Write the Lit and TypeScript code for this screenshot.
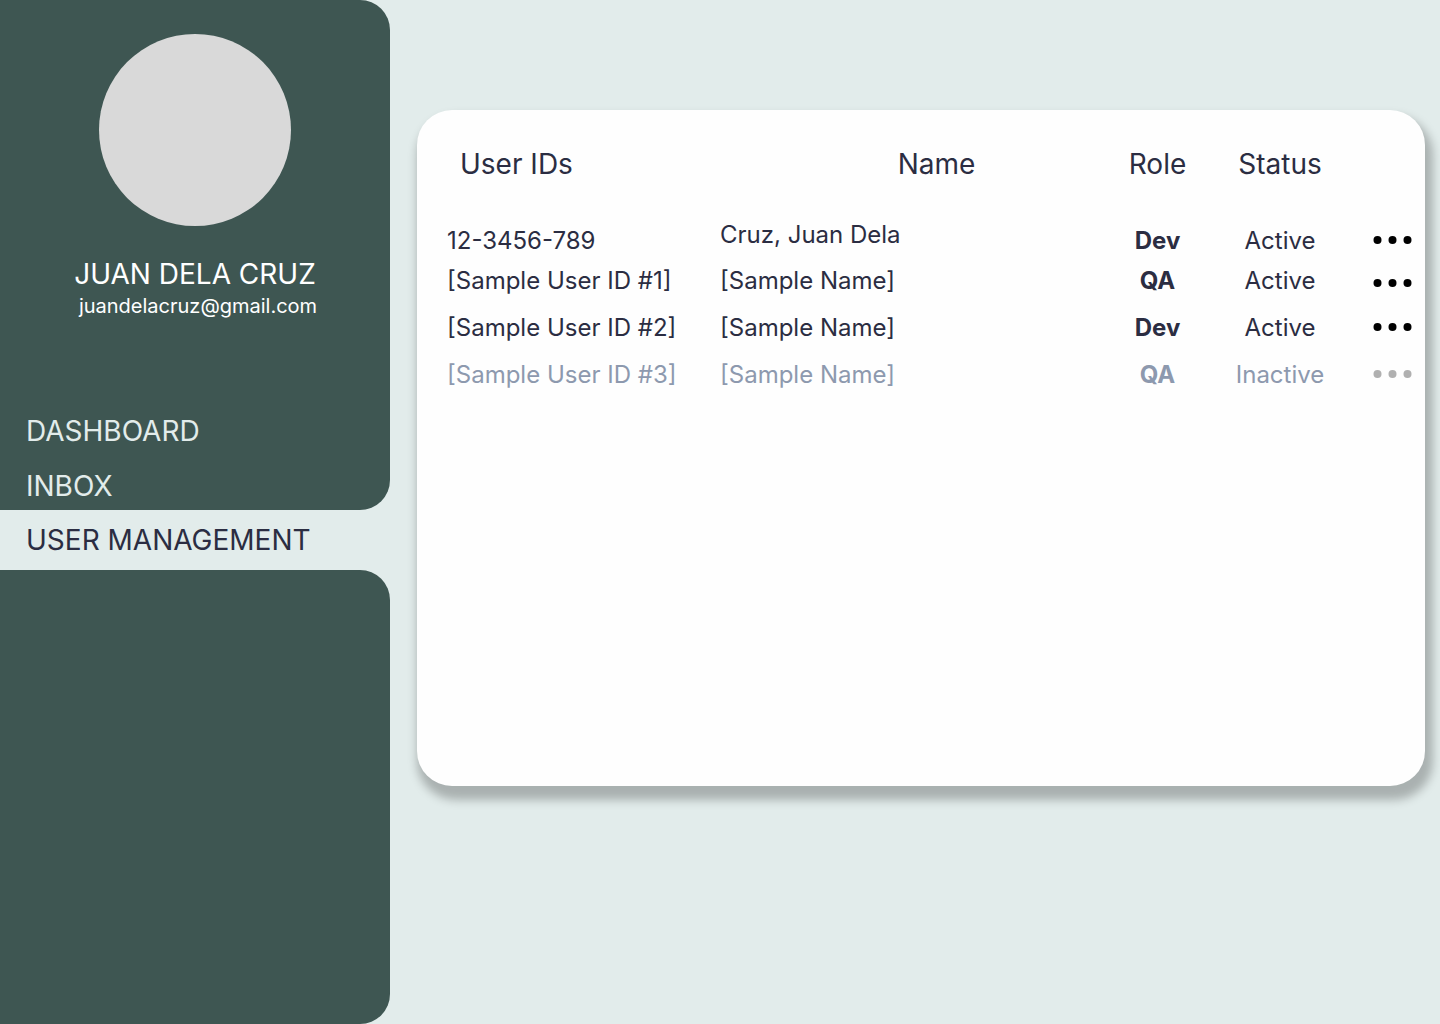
import { LitElement, html, css } from "lit";
import { customElement, property, state } from "lit/decorators.js";
import { classMap } from "lit/directives/class-map.js";

interface User {
  id: string;
  name: string;
  role: string;
  active: boolean;
}

@customElement("side-bar")
class SideBar extends LitElement {
  static styles = css`
    :host {
      display: flex;
      flex-direction: column;
    }
    nav {
      display: flex;
      flex-direction: column;
      flex: 1;
    }
    .panel {
      background: #3e5652;
      border-radius: 0 30px 30px 0;
    }
    .top {
      padding: 34px 0 7px;
    }
    .rest {
      flex: 1;
    }
    .profile {
      display: flex;
      flex-direction: column;
      align-items: center;
      color: #fff;
    }
    .avatar {
      width: 192px;
      height: 192px;
      border-radius: 50%;
      background: #d9d9d9;
    }
    .name {
      margin-top: 31px;
      font-size: 28px;
      line-height: 34px;
    }
    .email {
      margin-top: 3px;
      padding-left: 6px;
      font-size: 20px;
      line-height: 24px;
    }
    .links {
      display: flex;
      flex-direction: column;
      gap: 21px;
      margin-top: 96px;
    }
    a {
      padding-left: 26px;
      font-size: 28px;
      line-height: 34px;
      color: #e2eceb;
      text-decoration: none;
    }
    .current {
      padding-top: 13px;
      padding-bottom: 13px;
      color: #2b2d42;
    }
  `;

  @property() name = "";
  @property() email = "";

  render() {
    return html`
      <nav aria-label="Main">
        <div class="panel top">
          <div class="profile">
            <div class="avatar"></div>
            <div class="name">${this.name}</div>
            <div class="email">${this.email}</div>
          </div>
          <div class="links">
            <a href="#dashboard">DASHBOARD</a>
            <a href="#inbox">INBOX</a>
          </div>
        </div>
        <a class="current" href="#users" aria-current="page">USER MANAGEMENT</a>
        <div class="panel rest"></div>
      </nav>
    `;
  }
}

@customElement("user-table")
class UserTable extends LitElement {
  static styles = css`
    :host {
      display: block;
    }
    table {
      width: 100%;
      table-layout: fixed;
      border-collapse: collapse;
      color: #2b2d42;
    }
    .col-id {
      width: 303px;
    }
    .col-role {
      width: 85px;
    }
    .col-status {
      width: 160px;
    }
    .col-menu {
      width: 65px;
    }
    th {
      padding: 37px 0 39px;
      font-size: 28px;
      font-weight: 400;
      line-height: 34px;
      text-align: center;
      white-space: nowrap;
    }
    th.id {
      padding-left: 43px;
      text-align: left;
    }
    th.name {
      padding-left: 38px;
    }
    td {
      padding: 0 0 18px;
      vertical-align: top;
      font-size: 24px;
      line-height: 29px;
      text-align: center;
      white-space: nowrap;
    }
    td.id {
      padding-left: 30px;
      text-align: left;
    }
    td.name {
      text-align: left;
    }
    .first td {
      padding-top: 6px;
      padding-bottom: 11px;
    }
    .first td.name {
      padding-top: 0;
    }
    td.role {
      font-weight: 700;
    }
    td.menu {
      padding-bottom: 0;
    }
    .inactive {
      color: #8d99ae;
    }
    button {
      display: block;
      width: 100%;
      height: 28px;
      padding: 0;
      border: 0;
      background: none;
      color: #000;
      cursor: pointer;
    }
    .first + tr button {
      margin-top: 3px;
    }
    .inactive button {
      color: #b0b0b0;
    }
    svg {
      display: block;
      margin: 0 auto;
      fill: currentColor;
    }
  `;

  @property({ attribute: false }) users: User[] = [];

  private renderUser(user: User, index: number) {
    return html`
      <tr class=${classMap({ first: index === 0, inactive: !user.active })}>
        <td class="id">${user.id}</td>
        <td class="name">${user.name}</td>
        <td class="role">${user.role}</td>
        <td>${user.active ? "Active" : "Inactive"}</td>
        <td class="menu">
          <button type="button" aria-label="More actions">
            <svg width="39" height="8" viewBox="0 0 39 8" aria-hidden="true">
              <circle cx="4.5" cy="4" r="4" />
              <circle cx="19.5" cy="4" r="4" />
              <circle cx="34.5" cy="4" r="4" />
            </svg>
          </button>
        </td>
      </tr>
    `;
  }

  render() {
    return html`
      <table>
        <colgroup>
          <col class="col-id" />
          <col />
          <col class="col-role" />
          <col class="col-status" />
          <col class="col-menu" />
        </colgroup>
        <thead>
          <tr>
            <th class="id" scope="col">User IDs</th>
            <th class="name" scope="col">Name</th>
            <th scope="col">Role</th>
            <th scope="col">Status</th>
            <td></td>
          </tr>
        </thead>
        <tbody>
          ${this.users.map((user, index) => this.renderUser(user, index))}
        </tbody>
      </table>
    `;
  }
}

@customElement("app-root")
class AppRoot extends LitElement {
  static styles = css`
    :host {
      display: grid;
      grid-template-columns: 390px minmax(0, 1fr);
      min-height: 100vh;
      background: #e2eceb;
      font-family: Inter, "Liberation Sans", sans-serif;
    }
    main {
      padding: 110px 15px 110px 27px;
    }
    .card {
      min-height: 66vh;
      border-radius: 35px;
      background: #fefefe;
      box-shadow: 4px 10px 10px 4px rgba(0, 0, 0, 0.25);
    }
  `;

  @state() private users: User[] = [
    { id: "12-3456-789", name: "Cruz, Juan Dela", role: "Dev", active: true },
    { id: "[Sample User ID #1]", name: "[Sample Name]", role: "QA", active: true },
    { id: "[Sample User ID #2]", name: "[Sample Name]", role: "Dev", active: true },
    { id: "[Sample User ID #3]", name: "[Sample Name]", role: "QA", active: false },
  ];

  render() {
    return html`
      <side-bar name="JUAN DELA CRUZ" email="juandelacruz@gmail.com"></side-bar>
      <main>
        <div class="card">
          <user-table .users=${this.users}></user-table>
        </div>
      </main>
    `;
  }
}
